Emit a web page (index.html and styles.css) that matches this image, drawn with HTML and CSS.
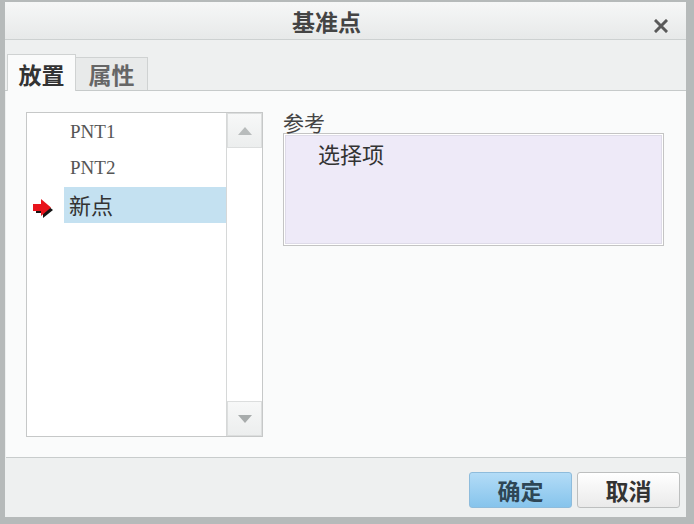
FILE: index.html
```html
<!DOCTYPE html>
<html>
  <head>
    <meta charset="utf-8">
    <title>基准点</title>
    <link rel="stylesheet" href="styles.css">
  </head>
  <body>
    <div class="window">
      <div class="titlebar">
        <span class="title">基准点</span>
        <span class="close">
          <svg width="14" height="14" viewBox="0 0 14 14">
            <path d="M2 2 L12 12 M12 2 L2 12" stroke="#5a5a5a" stroke-width="3" stroke-linecap="square"/>
          </svg>
        </span>
      </div>
      <div class="tabs">
        <div class="tab active">放置</div>
        <div class="tab">属性</div>
      </div>
      <div class="panel">
        <div class="listbox">
          <div class="items">
            <div class="item">PNT1</div>
            <div class="item">PNT2</div>
            <div class="item new">
              <span class="marker">
                <svg width="22" height="20" viewBox="0 0 22 20">
                  <path d="M4 8 L11 8 L11 3 L21 11 L11 19 L11 14 L4 14 Z" fill="#151515"/>
                  <path d="M1 5 L9 5 L9 0 L19 8.5 L9 17 L9 12 L1 12 Z" fill="#e8141c"/>
                </svg>
              </span>
              <span class="sel">新点</span>
            </div>
          </div>
          <div class="scrollbar">
            <div class="sbtn">
              <svg width="14" height="8" viewBox="0 0 14 8"><path d="M0 8 L7 0 L14 8 Z" fill="#b8bcbc"/></svg>
            </div>
            <div class="track"></div>
            <div class="sbtn">
              <svg width="14" height="8" viewBox="0 0 14 8"><path d="M0 0 L14 0 L7 8 Z" fill="#a8acac"/></svg>
            </div>
          </div>
        </div>
        <div class="refs">
          <div class="label">参考</div>
          <div class="refbox">选择项</div>
        </div>
      </div>
      <div class="footer">
        <button class="btn ok">确定</button>
        <button class="btn">取消</button>
      </div>
    </div>
  </body>
</html>
```

FILE: styles.css
```css
body {
  margin: 0;
  background-color: #b6baba;
  font-family: "Noto Sans CJK SC", "Noto Sans", sans-serif;
}
.window {
  margin: 2px 0 0 5px;
  width: 681px;
  height: 515px;
  display: flex;
  flex-direction: column;
  background-color: #eef0f0;
}
.titlebar {
  height: 37px;
  display: flex;
  align-items: center;
  justify-content: center;
  padding-right: 38px;
  position: relative;
  background: linear-gradient(#f6f7f7, #e7e9e9);
  border-bottom: 1px solid #cdd1d1;
}
.title {
  font-size: 23px;
  font-weight: bold;
  color: #444;
}
.close {
  position: absolute;
  right: 18px;
  top: 12px;
  width: 14px;
  height: 14px;
}
.tabs {
  height: 50px;
  display: flex;
  align-items: flex-end;
  padding-left: 2px;
  border-bottom: 1px solid #c6caca;
}
.tab {
  width: 71px;
  height: 32px;
  border: 1px solid #cfd2d2;
  border-bottom: none;
  border-left: none;
  background-color: #e8eaea;
  color: #666;
  font-size: 23px;
  font-weight: bold;
  line-height: 32px;
  text-align: center;
}
.tab.active {
  width: 67px;
  height: 36px;
  line-height: 38px;
  margin-bottom: -1px;
  border-left: 1px solid #cfd2d2;
  background-color: #fafbfb;
  color: #333;
}
.panel {
  height: 367px;
  margin-left: 1px;
  background-color: #fafbfb;
  display: flex;
  padding: 21px 0 0 20px;
  box-sizing: border-box;
  border-bottom: 1px solid #c8cccc;
}
.listbox {
  width: 235px;
  height: 323px;
  border: 1px solid #c6c8c8;
  background-color: #fff;
  display: flex;
}
.items {
  flex: 1;
  padding-top: 1px;
}
.item {
  height: 36px;
  line-height: 36px;
  padding-left: 43px;
  font-family: "Liberation Serif", serif;
  font-size: 19px;
  color: #555;
}
.item.new {
  display: flex;
  align-items: center;
  padding-left: 5px;
  margin-top: 1px;
}
.marker {
  width: 22px;
  height: 20px;
  margin-right: 10px;
}
.sel {
  flex: 1;
  height: 36px;
  padding-left: 5px;
  background-color: #c4e1f1;
  font-family: "Noto Sans CJK SC", sans-serif;
  font-size: 22px;
  line-height: 35px;
  color: #333;
}
.scrollbar {
  width: 35px;
  border-left: 1px solid #d6d8d8;
  display: flex;
  flex-direction: column;
}
.sbtn {
  height: 33px;
  display: flex;
  align-items: center;
  justify-content: center;
  background: linear-gradient(#f7f8f8, #eceeee);
  border: 1px solid #dcdede;
}
.track {
  flex: 1;
}
.refs {
  margin-left: 20px;
  width: 381px;
}
.label {
  font-size: 21px;
  line-height: 22px;
  color: #444;
  margin-top: -1px;
}
.refbox {
  height: 106px;
  border: 1px solid #c4c4c4;
  box-shadow: inset 0 0 0 1px #fff, inset 0 0 0 2px #dedbe8;
  background-color: #eeeaf8;
  padding: 5px 0 0 34px;
  font-size: 22px;
  line-height: 28px;
  color: #333;
}
.footer {
  flex: 1;
  display: flex;
  justify-content: flex-end;
  align-items: flex-start;
  gap: 5px;
  padding: 14px 6px 0 0;
}
.btn {
  width: 103px;
  height: 36px;
  border: 1px solid #bdbfbf;
  border-radius: 3px;
  background: linear-gradient(#ffffff, #eaeaea);
  font-family: "Noto Sans CJK SC", sans-serif;
  font-size: 23px;
  font-weight: bold;
  color: #333;
  padding: 0;
}
.btn.ok {
  border-color: #8ebcdc;
  background: linear-gradient(#b3dcf7, #86c4ec);
  color: #2e4656;
}
```
